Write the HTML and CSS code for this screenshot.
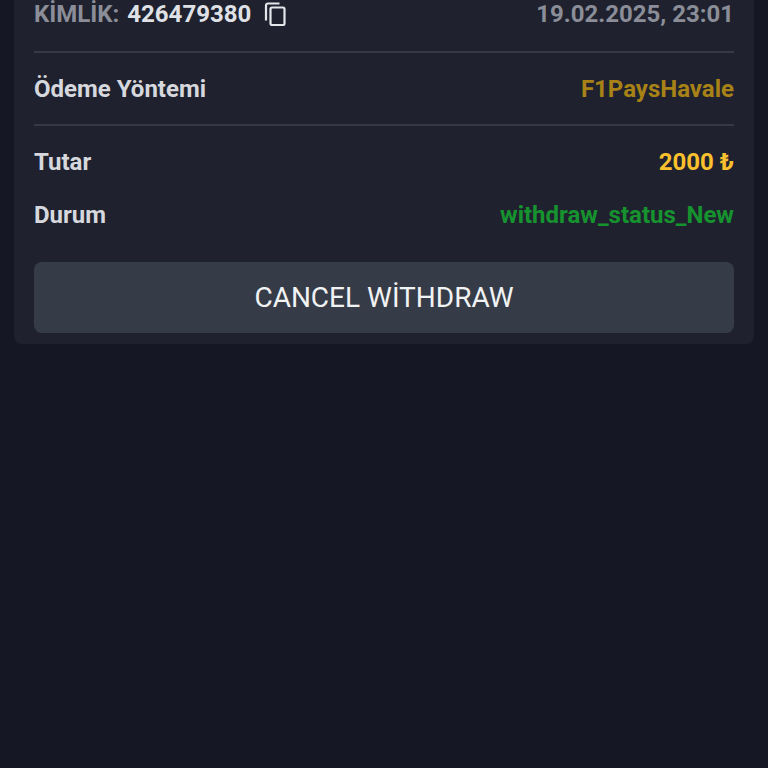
FILE: index.html
```html
<!DOCTYPE html>
<html lang="tr">
<head>
    <meta charset="UTF-8">
    <meta name="viewport" content="width=device-width, initial-scale=1.0">
    <title>Withdraw details</title>
    <link rel="stylesheet" href="styles.css">
</head>
<body>
    <section class="card">
        <div class="row top-row">
            <div class="id-group">
                <span class="id-label">KİMLİK:</span>
                <span class="id-value">426479380</span>
                <svg class="copy-icon" width="24" height="24" viewBox="0 0 24 24" fill="none" stroke="#e4e6ea" stroke-width="2.2">
                    <path d="M16.5 1.5H5a2 2 0 0 0-2 2V18.5"/>
                    <rect x="7.5" y="5.5" width="14" height="17.5" rx="1.5"/>
                </svg>
            </div>
            <span class="date">19.02.2025, 23:01</span>
        </div>
        <div class="row method-row">
            <span class="label">Ödeme Yöntemi</span>
            <span class="method">F1PaysHavale</span>
        </div>
        <div class="amount-block">
            <div class="row">
                <span class="label">Tutar</span>
                <span class="amount">2000 ₺</span>
            </div>
            <div class="row">
                <span class="label">Durum</span>
                <span class="status">withdraw_status_New</span>
            </div>
        </div>
        <button class="cancel-btn">CANCEL WİTHDRAW</button>
    </section>
</body>
</html>
```

FILE: styles.css
```css
* {
    margin: 0;
    padding: 0;
    box-sizing: border-box;
}

body {
    font-family: Roboto, 'Liberation Sans', sans-serif;
    background-color: #151824;
    height: 768px;
    overflow: hidden;
    padding: 0 14px;
}

.card {
    margin-top: -39px;
    padding: 20px 20px 11px;
    background-color: #1f222e;
    border-radius: 8px;
}

.row {
    display: flex;
    justify-content: space-between;
    align-items: center;
    font-size: 24px;
    font-weight: 700;
    line-height: 28px;
}

.top-row {
    height: 72px;
    padding-bottom: 4px;
    border-bottom: 2px solid #363945;
}

.method-row {
    height: 73px;
    border-bottom: 2px solid #363945;
}

.id-group {
    display: flex;
    align-items: center;
    gap: 8px;
}

.id-label,
.date {
    color: #8b8e98;
}

.id-value {
    color: #dfe1e6;
}

.copy-icon {
    margin-left: 4px;
}

.label {
    color: #d6d8de;
}

.method {
    color: #a88216;
}

.amount {
    color: #fbc02d;
}

.status {
    color: #16922f;
}

.amount-block {
    display: flex;
    flex-direction: column;
    gap: 25px;
    padding-top: 22px;
}

.cancel-btn {
    display: block;
    width: 100%;
    height: 71px;
    margin-top: 33px;
    padding-bottom: 1px;
    border: none;
    border-radius: 8px;
    background-color: #363c47;
    color: #f1f2f4;
    font-family: inherit;
    font-size: 28px;
    font-weight: 400;
}
```
